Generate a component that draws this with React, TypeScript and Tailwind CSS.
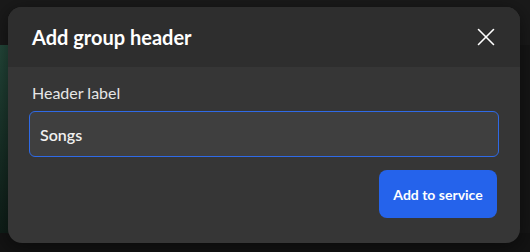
import { X } from "lucide-react";

export default function App() {
  return (
    <div className="relative h-[252px] w-[530px] overflow-hidden bg-[#1a1a1a] font-['Lato',sans-serif]">
      <div className="flex h-full flex-col">
        <div className="h-[45px] bg-[#1a1a1a]" />
        <div className="flex flex-1">
          <div className="w-[20px] bg-gradient-to-b from-[#24493b] to-[#0f1e18]" />
          <div className="flex-1 bg-[#161616]" />
        </div>
        <div className="h-[19px] bg-[#131313]" />
      </div>

      <div className="absolute left-[8px] top-[7px] flex h-[236px] w-[512px] flex-col overflow-hidden rounded-[14px] bg-[#363636] shadow-[0_4px_20px_rgba(0,0,0,0.5)]">
        <div className="flex h-[60px] items-center justify-between bg-[#2e2e2e] pl-[24px] pr-[26px]">
          <h2 className="text-[20px] font-bold text-white">Add group header</h2>
          <button className="-mr-[7px] text-white">
            <X size={30} strokeWidth={1.3} />
          </button>
        </div>
        <div className="flex flex-col px-[21px] pt-[14px]">
          <label className="pl-[3px] text-[16px] text-[#e6e6e6]">Header label</label>
          <input
            defaultValue="Songs"
            className="mt-[6px] h-[46px] w-full rounded-[6px] border border-[#2f6ae6] bg-[#3f3f3f] px-[10px] text-[16px] font-semibold text-[#f0f0f0] outline-none"
          />
          <div className="mt-[13px] flex justify-end pr-[2px]">
            <button className="h-[48px] w-[118px] rounded-[8px] bg-[#2563eb] text-[14px] font-bold text-white">
              Add to service
            </button>
          </div>
        </div>
      </div>
    </div>
  );
}
